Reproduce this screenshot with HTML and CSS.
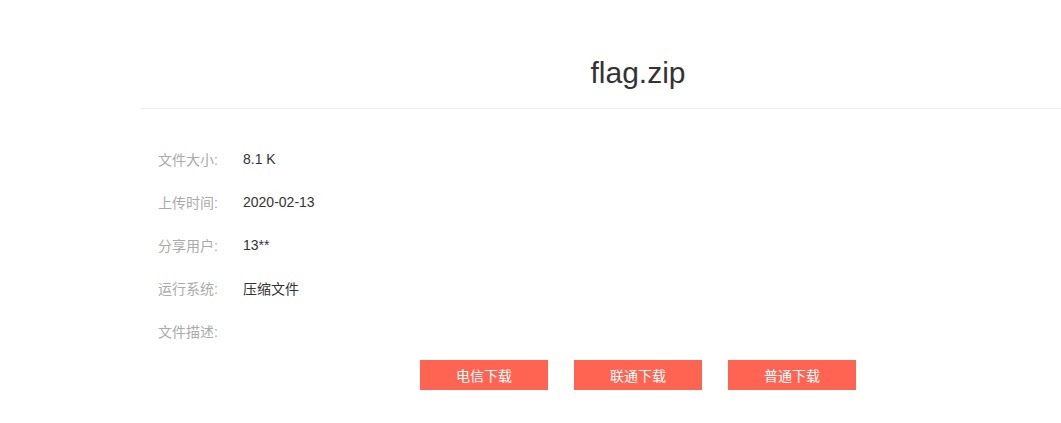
FILE: index.html
```html
<!DOCTYPE html>
<html lang="zh-CN">
<head>
<meta charset="utf-8">
<title>flag.zip</title>
<link rel="stylesheet" href="styles.css">
</head>
<body>
<div class="page">
  <div class="title">flag.zip</div>
  <div class="info">
    <div class="row"><span class="label">文件大小:</span><span class="value">8.1 K</span></div>
    <div class="row"><span class="label">上传时间:</span><span class="value">2020-02-13</span></div>
    <div class="row"><span class="label">分享用户:</span><span class="value">13**</span></div>
    <div class="row"><span class="label">运行系统:</span><span class="value">压缩文件</span></div>
    <div class="row"><span class="label">文件描述:</span><span class="value"></span></div>
  </div>
  <div class="buttons">
    <a class="btn">电信下载</a>
    <a class="btn">联通下载</a>
    <a class="btn">普通下载</a>
  </div>
</div>
</body>
</html>
```
FILE: styles.css
```css
html, body {
  margin: 0;
  padding: 0;
  background: #fff;
  overflow: hidden;
}
body {
  font-family: "Liberation Sans", "Noto Sans CJK SC", sans-serif;
  color: #333;
}
.page {
  margin-left: 141px;
  width: 994px;
}
.title {
  padding-top: 50px;
  padding-bottom: 12px;
  height: 46px;
  line-height: 46px;
  font-size: 30px;
  text-align: center;
  color: #333;
  border-bottom: 1px solid #eeeeee;
}
.info {
  margin-top: 28px;
  padding-left: 17px;
}
.row {
  display: flex;
  align-items: center;
  height: 43px;
  font-size: 14px;
}
.label {
  width: 85px;
  color: #aaaaaa;
}
.value {
  color: #333;
  font-size: 14px;
}
.buttons {
  margin-top: 8px;
  display: flex;
  justify-content: center;
  gap: 26px;
}
.btn {
  display: flex;
  align-items: center;
  justify-content: center;
  width: 128px;
  height: 30px;
  background: #ff6452;
  color: #fff;
  font-size: 14px;
  cursor: pointer;
}
```
